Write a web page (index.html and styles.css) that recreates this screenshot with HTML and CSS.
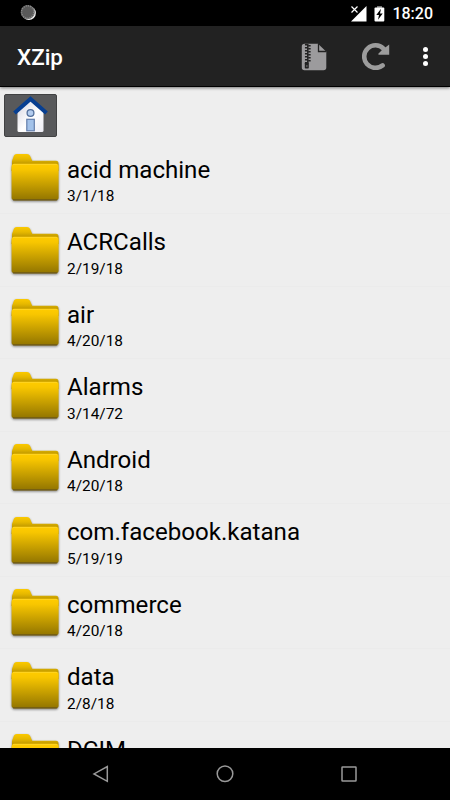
FILE: index.html
```
<!DOCTYPE html>
<html lang="en">
  <head>
    <meta charset="UTF-8" />
    <meta name="viewport" content="width=device-width, initial-scale=1.0" />
    <title>XZip</title>
    <link rel="stylesheet" href="styles.css">
  </head>
  <body>
    <!-- Shared folder icon -->
    <svg class="defs" width="0" height="0">
      <defs>
        <linearGradient id="front" x1="0" y1="0" x2="0" y2="1">
          <stop offset="0" stop-color="#ffcc00" />
          <stop offset="0.15" stop-color="#f8c600" />
          <stop offset="1" stop-color="#917400" />
        </linearGradient>
        <linearGradient id="back" x1="0" y1="0" x2="0" y2="1">
          <stop offset="0" stop-color="#fbc900" />
          <stop offset="0.3" stop-color="#e6b800" />
          <stop offset="0.600" stop-color="#bd9700" />
          <stop offset="1" stop-color="#a98700" />
        </linearGradient>
        <linearGradient id="wall" x1="0" y1="0" x2="1" y2="1">
          <stop offset="0" stop-color="#d2d2df" />
          <stop offset="0.55" stop-color="#ffffff" />
          <stop offset="1" stop-color="#ececf4" />
        </linearGradient>
        <symbol id="folder" viewBox="0 0 52 54">
          <path d="M4 14V10L6 4.500Q6.600 3 8.500 3H19Q21.200 3 22 4.800L24.200 9.700H48Q50.500 9.700 50.500 12.500V20H3.500Z" fill="url(#back)" />
          <rect x="3.600" y="12.800" width="47" height="36.500" rx="2.800" fill="url(#front)" />
          <path d="M5 13.400H49.200" stroke="#ffd62b" stroke-width="0.800" />
          <path d="M5 48.900H49.200" stroke="#6c5818" stroke-width="1.200" />
        </symbol>
      </defs>
    </svg>

    <div class="status-bar">
      <svg class="sync" width="18" height="18" viewBox="0 0 18 18">
        <circle cx="8.900" cy="9.100" r="7" fill="#eee" />
        <circle cx="7.700" cy="8" r="7" fill="#595959" />
        <circle cx="7.700" cy="8" r="6.200" fill="none" stroke="#888" stroke-width="1.500" stroke-dasharray="1.200 1" />
      </svg>
      <svg class="signal" width="18" height="18" viewBox="0 0 18 18">
        <path d="M16.500 1V16.500H1L7 10.500L9.500 8Z" fill="#fff" />
        <path d="M1.500 1.500L7.500 7.500M7.500 1.500L1.500 7.500" stroke="#fff" stroke-width="1.200" />
      </svg>
      <svg class="battery" width="11" height="18" viewBox="0 0 11 18">
        <path d="M3 1H8V3H3Z" fill="#777" />
        <rect x="0.500" y="2.500" width="9.800" height="14" rx="1" fill="#fff" />
        <path d="M7 3.700L2.300 10H5L4 14.800L8.700 8.500H6Z" fill="#000" />
      </svg>
      <span class="clock">18:20</span>
    </div>

    <div class="header">
      <h1>XZip</h1>
      <svg class="zip-icon" width="26" height="28" viewBox="0 0 26 28">
        <path d="M3 0.700H17L25.300 8.800V24.500Q25.300 27.300 22.500 27.300H3.500Q0.800 27.300 0.800 24.500V3.500Q0.800 0.700 3.500 0.700Z" fill="#9c9b9d" />
        <path d="M17.500 1V8.500H25" fill="none" stroke="#222" stroke-width="1.300" />
        <path d="M6.800 1V20" stroke="#222" stroke-width="1.500" />
        <path d="M5.200 1V20M8.400 2V20" stroke="#222" stroke-width="2.500" stroke-dasharray="1.500 1.500" />
        <rect x="3.800" y="19.500" width="4" height="6" rx="0.800" fill="#222" />
        <path d="M5.200 23H6.500" stroke="#9c9b9d" stroke-width="1" />
      </svg>
      <svg class="refresh-icon" width="28" height="28" viewBox="0 0 28 28">
        <path d="M21.500 6.600A11.300 11.300 0 1 0 20.600 23.400" fill="none" stroke="#9c9c9c" stroke-width="4.600" stroke-linecap="round" />
        <path d="M27.200 2.500V12.800H17Q15.500 12.600 16.500 11.500L20 8L22 6.500Z" fill="#9c9c9c" />
      </svg>
      <div class="more"><i></i><i></i><i></i></div>
    </div>

    <div class="path-bar">
      <button class="home">
        <svg width="38" height="38" viewBox="0 0 38 38">
          <path d="M4.500 16L18 4L30.500 16V34.500Q30.500 36 29 36H6Q4.500 36 4.500 34.500Z" fill="url(#wall)" />
          <path d="M1.500 17L17.500 3L33.500 17" fill="none" stroke="#073f91" stroke-width="4" />
          <circle cx="17.500" cy="17" r="3.400" fill="#b4cdef" stroke="#526f9b" stroke-width="1.300" />
          <rect x="13.800" y="23.300" width="7.500" height="11.500" fill="#a3c2ea" stroke="#637eab" stroke-width="1.200" />
        </svg>
      </button>
    </div>

    <div class="file-list">
      <div class="row">
        <svg class="folder"><use href="#folder" /></svg>
        <div class="info">
          <div class="name">acid machine</div>
          <div class="date">3/1/18</div>
        </div>
      </div>
      <div class="row">
        <svg class="folder"><use href="#folder" /></svg>
        <div class="info">
          <div class="name">ACRCalls</div>
          <div class="date">2/19/18</div>
        </div>
      </div>
      <div class="row">
        <svg class="folder"><use href="#folder" /></svg>
        <div class="info">
          <div class="name">air</div>
          <div class="date">4/20/18</div>
        </div>
      </div>
      <div class="row">
        <svg class="folder"><use href="#folder" /></svg>
        <div class="info">
          <div class="name">Alarms</div>
          <div class="date">3/14/72</div>
        </div>
      </div>
      <div class="row">
        <svg class="folder"><use href="#folder" /></svg>
        <div class="info">
          <div class="name">Android</div>
          <div class="date">4/20/18</div>
        </div>
      </div>
      <div class="row">
        <svg class="folder"><use href="#folder" /></svg>
        <div class="info">
          <div class="name">com.facebook.katana</div>
          <div class="date">5/19/19</div>
        </div>
      </div>
      <div class="row">
        <svg class="folder"><use href="#folder" /></svg>
        <div class="info">
          <div class="name">commerce</div>
          <div class="date">4/20/18</div>
        </div>
      </div>
      <div class="row">
        <svg class="folder"><use href="#folder" /></svg>
        <div class="info">
          <div class="name">data</div>
          <div class="date">2/8/18</div>
        </div>
      </div>
      <div class="row">
        <svg class="folder"><use href="#folder" /></svg>
        <div class="info">
          <div class="name">DCIM</div>
        </div>
      </div>
    </div>

    <div class="nav-bar">
      <svg width="18" height="18" viewBox="0 0 18 18">
        <path d="M15.300 1.500V16.300L2 8.900Z" />
      </svg>
      <svg width="18" height="18" viewBox="0 0 18 18">
        <circle cx="9" cy="8.800" r="7.800" />
      </svg>
      <svg width="18" height="18" viewBox="0 0 18 18">
        <rect x="2" y="2" width="14" height="14" rx="0.500" />
      </svg>
    </div>
  </body>
</html>
```

FILE: styles.css
```
* {
  box-sizing: border-box;
}

body {
  margin: 0;
  height: 800px;
  display: flex;
  flex-direction: column;
  overflow: hidden;
  font-family: Roboto, sans-serif;
  background-color: #eeeeee;
  color: #000;
}

.defs {
  position: absolute;
}

/* Status bar */
.status-bar {
  flex: none;
  height: 26px;
  padding: 0 17px 0 20px;
  display: flex;
  align-items: center;
  background-color: #000;
  color: #fff;
}

.sync {
  margin-right: auto;
}

.signal {
  margin-top: 1px;
  margin-right: 6px;
}

.battery {
  margin-top: 1px;
  margin-right: 7px;
}

.clock {
  font-size: 16px;
  font-weight: 500;
  line-height: 26px;
  padding-top: 2px;
}

/* Title bar */
.header {
  flex: none;
  height: 61px;
  padding: 0 22px 0 17px;
  display: flex;
  align-items: center;
  background-color: #222;
  border-bottom: 1px solid #000;
  box-shadow: 0 1px 3px rgba(0, 0, 0, 0.5);
  color: #fff;
}

h1 {
  margin: 2px auto 0 0;
  font-size: 22.4px;
  font-weight: 500;
}

.zip-icon {
  margin-top: 1px;
  margin-right: 35px;
}

.refresh-icon {
  margin-right: 33px;
}

.more {
  display: flex;
  flex-direction: column;
  gap: 2px;
}

.more i {
  width: 5px;
  height: 5px;
  border-radius: 50%;
  background-color: #fff;
}

/* Path buttons */
.path-bar {
  flex: none;
  height: 54.8px;
  padding: 7px 4px 0;
}

.home {
  display: flex;
  width: 52.5px;
  height: 43px;
  padding: 1px 0 0 8px;
  border: 1px solid #414243;
  border-radius: 2px;
  background-color: #58595b;
}

.home svg {
  flex: none;
}

/* Files */
.file-list {
  flex: 1;
  min-height: 0;
  overflow: hidden;
}

.row {
  display: flex;
  height: 72.5px;
  padding: 9px 8px 0;
  border-bottom: 1px solid #ebebeb;
}

.folder {
  width: 52px;
  height: 54px;
  margin-top: 0.5px;
  flex: none;
  filter: drop-shadow(0 1px 1px rgba(0, 0, 0, 0.45));
}

.info {
  padding: 5px 0 0 7px;
}

.name {
  font-size: 24.1px;
  line-height: 28px;
}

.date {
  margin-top: 3.4px;
  font-size: 15.4px;
  line-height: 19px;
}

/* Navigation bar */
.nav-bar {
  flex: none;
  height: 52px;
  display: flex;
  align-items: center;
  justify-content: center;
  gap: 106px;
  background-color: #000;
}

.nav-bar svg {
  fill: none;
  stroke: #999;
  stroke-width: 1.5;
}
```
